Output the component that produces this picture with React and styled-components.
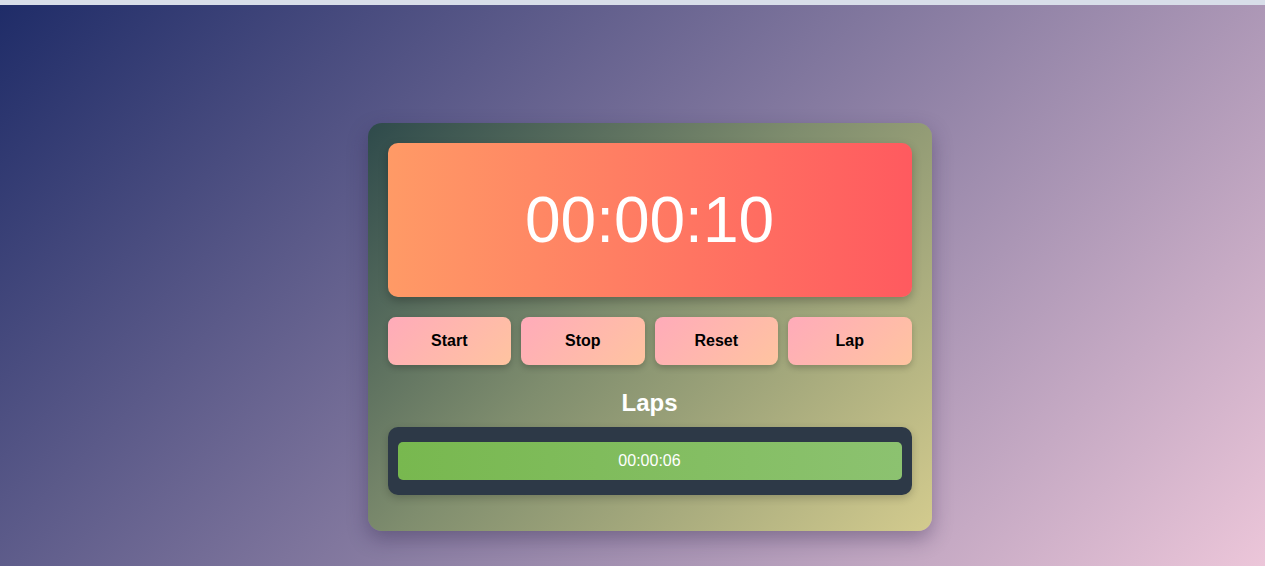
import React from 'react'
import styled, { createGlobalStyle } from 'styled-components';

const GlobalStyle = createGlobalStyle`
    html, body {
        margin: 0;
        padding: 0;
        height: 100%;
    }
    body {
        font-family: "Liberation Sans", Arial, sans-serif;
        background: #d9dfe9;
    }
    #root {
        height: 100%;
    }
`;

const Page = styled.div`
    box-sizing: border-box;
    height: 100%;
    border-top: 5px solid #d8dee9;
    background: linear-gradient(135deg, #1f2c68 0%, #857aa0 50%, #ecc6d9 100%);
    display: flex;
    justify-content: center;
    padding: 118px 0 0 34px;
`;

const Card = styled.div`
    box-sizing: border-box;
    width: 564px;
    height: 408px;
    padding: 20px;
    border-radius: 14px;
    background: linear-gradient(135deg, #2e4a4b 0%, #7f8d6e 45%, #d3cb8e 100%);
    box-shadow: 0 8px 20px rgba(40, 30, 70, 0.35);
    display: flex;
    flex-direction: column;
`;

const Display = styled.div`
    height: 154px;
    border-radius: 10px;
    background: linear-gradient(to right, #ff9a66, #ff5a5f);
    box-shadow: 0 4px 10px rgba(0, 0, 0, 0.25);
    display: flex;
    align-items: center;
    justify-content: center;
    color: #fff;
    font-size: 64px;
`;

const Controls = styled.div`
    display: grid;
    grid-template-columns: repeat(4, 1fr);
    gap: 10px;
    margin-top: 20px;
`;

const Button = styled.button`
    height: 48px;
    border: none;
    border-radius: 8px;
    background: linear-gradient(135deg, #ffabba, #ffc4a0);
    box-shadow: 0 3px 6px rgba(0, 0, 0, 0.2);
    font-family: "Liberation Sans", Arial, sans-serif;
    font-weight: bold;
    font-size: 16px;
    color: #000;
    cursor: pointer;
`;

const Title = styled.h2`
    margin: 24px 0 10px;
    text-align: center;
    color: #fff;
    font-size: 24px;
    line-height: 28px;
`;

const LapList = styled.ul`
    list-style: none;
    margin: 0;
    padding: 15px 10px;
    border-radius: 10px;
    background: #2d3947;
    box-shadow: 0 3px 8px rgba(0, 0, 0, 0.2);
`;

const LapItem = styled.li`
    height: 38px;
    border-radius: 5px;
    background: linear-gradient(to right, #78b84f, #8cc270);
    color: #fff;
    font-size: 16px;
    display: flex;
    align-items: center;
    justify-content: center;
`;

const App = () => {
    const laps = ["00:00:06"];
    return (
        <>
            <GlobalStyle />
            <Page>
                <Card>
                    <Display>00:00:10</Display>
                    <Controls>
                        <Button>Start</Button>
                        <Button>Stop</Button>
                        <Button>Reset</Button>
                        <Button>Lap</Button>
                    </Controls>
                    <Title>Laps</Title>
                    <LapList>
                        {laps.map((lap) => <LapItem key={lap}>{lap}</LapItem>)}
                    </LapList>
                </Card>
            </Page>
        </>
    )
}

export default App;
